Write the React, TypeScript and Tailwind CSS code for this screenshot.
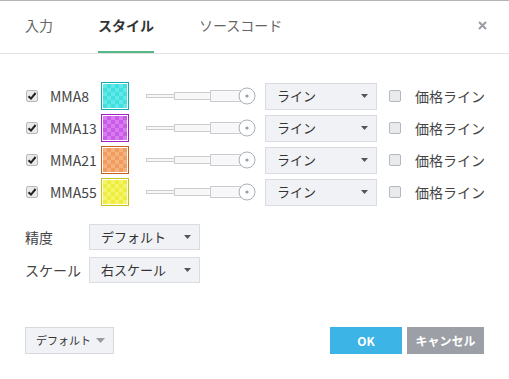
import React from 'react';

const FONT = "font-['Noto_Sans_CJK_JP','Noto_Sans',sans-serif]";

const rows = [
  { name: 'MMA8', border: '#17a9ad', a: '#3fe0dd', b: '#62e8e6' },
  { name: 'MMA13', border: '#a31fc4', a: '#c95be8', b: '#d67cef' },
  { name: 'MMA21', border: '#c4601c', a: '#f19b5c', b: '#f4b17e' },
  { name: 'MMA55', border: '#c2c21a', a: '#eeee3a', b: '#f4f46c' },
];

const Check: React.FC<{ checked?: boolean }> = ({ checked }) => (
  <span className="flex items-center justify-center w-[12px] h-[12px] rounded-[2px] border border-[#b5b8bc] bg-[#e9eaec]">
    {checked && (
      <svg width="10" height="10" viewBox="0 0 10 10">
        <path d="M1.5 5.2 L4 7.6 L8.6 2" fill="none" stroke="#222" strokeWidth="2" />
      </svg>
    )}
  </span>
);

const Caret: React.FC<{ color?: string; w?: number }> = ({ color = '#555', w = 7 }) => (
  <svg width={w} height={Math.ceil(w / 2)} viewBox={`0 0 ${w} ${Math.ceil(w / 2)}`}>
    <path d={`M0 0 L${w} 0 L${w / 2} ${Math.ceil(w / 2)} Z`} fill={color} />
  </svg>
);

const Swatch: React.FC<{ id: string; border: string; a: string; b: string }> = ({ id, border, a, b }) => (
  <div className="w-[28px] h-[28px] p-px" style={{ border: `1px solid ${border}` }}>
    <svg width="24" height="24" className="block">
      <defs>
        <pattern id={id} width="8" height="8" patternUnits="userSpaceOnUse">
          <rect width="8" height="8" fill={a} />
          <rect width="4" height="4" fill={b} />
          <rect x="4" y="4" width="4" height="4" fill={b} />
        </pattern>
      </defs>
      <rect width="24" height="24" fill={`url(#${id})`} />
    </svg>
  </div>
);

const Slider: React.FC = () => (
  <svg width="110" height="18" viewBox="0 0 110 18" className="block">
    <rect x="0.5" y="7.5" width="28" height="3" fill="#f7f7f7" stroke="#c9ccd0" />
    <rect x="28.5" y="5.5" width="36" height="7" fill="#f7f7f7" stroke="#c9ccd0" />
    <rect x="64.5" y="3.5" width="32" height="11" fill="#f7f7f7" stroke="#c9ccd0" />
    <circle cx="101" cy="9" r="8" fill="#fff" stroke="#a9aeb5" />
    <circle cx="101" cy="9" r="1.6" fill="#9a9ea4" />
  </svg>
);

const Select: React.FC<{ label: string; width: string; height?: string }> = ({ label, width, height = 'h-[27px]' }) => (
  <div className={`${width} ${height} flex items-center justify-between pl-[11px] pr-[8px] bg-[#f1f2f5] border border-[#d9dce0] text-[13px] text-[#333]`}>
    <span>{label}</span>
    <Caret />
  </div>
);

export default function App() {
  return (
    <div className={`w-[509px] h-[379px] bg-white border-t border-[#b4b4b4] flex flex-col ${FONT}`}>
      <div className="h-[53px] border-b border-[#e1e3e6] flex items-stretch pl-[25px] pr-[22px] text-[14px]">
        <div className="flex gap-[45px]">
          <div className="flex items-center pb-[3px] text-[#666]">入力</div>
          <div className="flex items-center pb-px border-b-2 border-[#56b886] font-bold text-[#333]">スタイル</div>
          <div className="flex items-center pb-[3px] text-[#666]">ソースコード</div>
        </div>
        <div className="ml-auto flex items-center pb-[3px]">
          <svg width="9" height="9" viewBox="0 0 9 9">
            <path d="M1 1 L8 8 M8 1 L1 8" stroke="#9a9da3" strokeWidth="2" />
          </svg>
        </div>
      </div>

      <div className="flex flex-col pt-[26px] pl-[26px] text-[14px] text-[#444]">
        {rows.map((r, i) => (
          <div key={r.name} className="h-[32px] flex items-center">
            <Check checked />
            <span className="ml-[12px] w-[51px]">{r.name}</span>
            <Swatch id={`sw${i}`} border={r.border} a={r.a} b={r.b} />
            <div className="ml-[17px]">
              <Slider />
            </div>
            <div className="ml-[9px]">
              <Select label="ライン" width="w-[112px]" />
            </div>
            <div className="ml-[12px]">
              <Check />
            </div>
            <span className="ml-[14px]">価格ライン</span>
          </div>
        ))}
      </div>

      <div className="flex flex-col gap-[7px] mt-[16px] pl-[25px] text-[14px] text-[#444]">
        <div className="flex items-center">
          <span className="w-[64px]">精度</span>
          <Select label="デフォルト" width="w-[111px]" height="h-[26px]" />
        </div>
        <div className="flex items-center">
          <span className="w-[64px]">スケール</span>
          <Select label="右スケール" width="w-[111px]" height="h-[26px]" />
        </div>
      </div>

      <div className="mt-auto mb-[25px] flex items-center px-[25px] text-[12px]">
        <div className="w-[89px] h-[27px] flex items-center justify-between pl-[10px] pr-[8px] bg-[#f1f2f5] border border-[#d6d9dd] text-[#333] text-[11px]">
          <span>デフォルト</span>
          <Caret color="#9a9a9a" w={9} />
        </div>
        <button className="ml-auto w-[72px] h-[27px] bg-[#3cb4e5] text-white font-bold">OK</button>
        <button className="ml-[5px] w-[77px] h-[27px] bg-[#9c9fa6] text-white font-bold">キャンセル</button>
      </div>
    </div>
  );
}
